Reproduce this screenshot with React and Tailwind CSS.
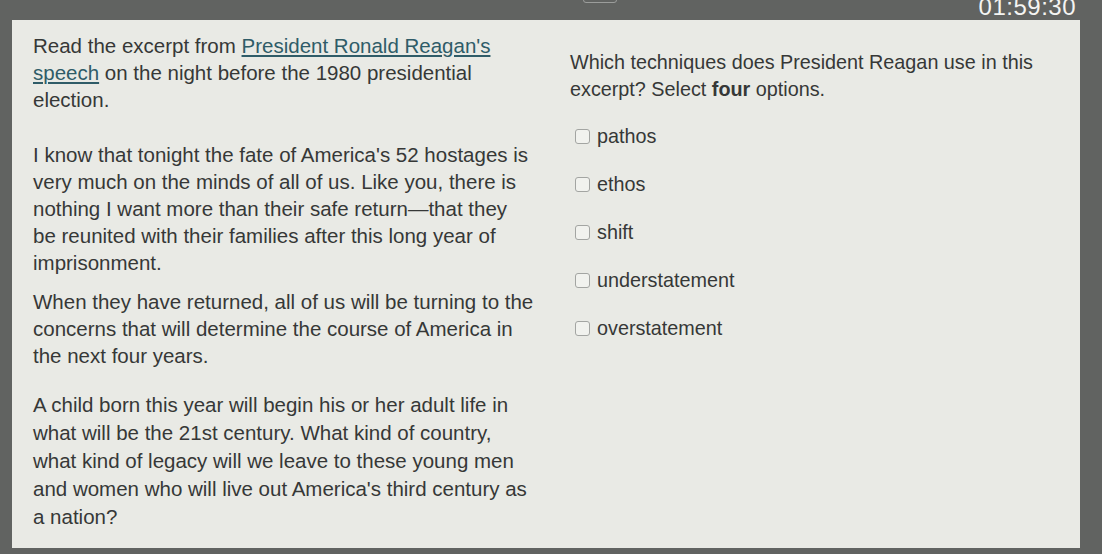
const options = ["pathos", "ethos", "shift", "understatement", "overstatement"];

function Lines({ lines, className = "" }) {
  return (
    <p className={className}>
      {lines.map((l, i) => (
        <span key={i} className="block whitespace-nowrap">
          {l}
        </span>
      ))}
    </p>
  );
}

function Checkbox({ label }) {
  return (
    <label className="flex h-[48px] items-center gap-[7px]">
      <span className="block h-[15px] w-[15px] rounded-[3px] border border-[#a3a5a2] bg-[#f1f2ee]" />
      <span>{label}</span>
    </label>
  );
}

export default function App() {
  return (
    <div
      className="flex h-[554px] w-[1102px] flex-col overflow-hidden bg-[#616361] text-[#363837]"
      style={{ fontFamily: '"Liberation Sans", Arial, sans-serif' }}
    >
      {/* top bar with timer */}
      <div className="relative flex h-[20px] shrink-0 items-start justify-end pr-[26px]">
        <div className="absolute left-[583px] top-[-12px] h-[15px] w-[34px] rounded-[3px] border border-[#9b9d9b]" />
        <span className="mt-[-6px] text-[24px] leading-[26px] tracking-[0.5px] text-[#f4f4f2]">01:59:30</span>
      </div>

      {/* question panel */}
      <div className="ml-[12px] flex h-[528px] w-[1068px] bg-[#e9eae5] text-[20.5px] leading-[27px]">
        <div className="w-[537px] shrink-0 pl-[21px] pt-[12px]">
          <p>
            <span className="block whitespace-nowrap">
              Read the excerpt from{" "}
              <span className="text-[#2f5c68] underline underline-offset-2">President Ronald Reagan's</span>
            </span>
            <span className="block whitespace-nowrap">
              <span className="text-[#2f5c68] underline underline-offset-2">speech</span> on the night before the
              1980 presidential
            </span>
            <span className="block">election.</span>
          </p>
          <Lines
            className="mt-[28px]"
            lines={[
              "I know that tonight the fate of America's 52 hostages is",
              "very much on the minds of all of us. Like you, there is",
              "nothing I want more than their safe return—that they",
              "be reunited with their families after this long year of",
              "imprisonment.",
            ]}
          />
          <Lines
            className="mt-[12px]"
            lines={[
              "When they have returned, all of us will be turning to the",
              "concerns that will determine the course of America in",
              "the next four years.",
            ]}
          />
          <Lines
            className="mt-[22px] leading-[28px]"
            lines={[
              "A child born this year will begin his or her adult life in",
              "what will be the 21st century. What kind of country,",
              "what kind of legacy will we leave to these young men",
              "and women who will live out America's third century as",
              "a nation?",
            ]}
          />
        </div>

        <div className="flex-1 pl-[21px] pt-[29px] text-[19.8px]">
          <p>
            <span className="block whitespace-nowrap">Which techniques does President Reagan use in this</span>
            <span className="block whitespace-nowrap">
              excerpt? Select <b className="font-bold">four</b> options.
            </span>
          </p>
          <div className="flex flex-col pl-[5px] pt-[9px]">
            {options.map((o) => (
              <Checkbox key={o} label={o} />
            ))}
          </div>
        </div>
      </div>
    </div>
  );
}
